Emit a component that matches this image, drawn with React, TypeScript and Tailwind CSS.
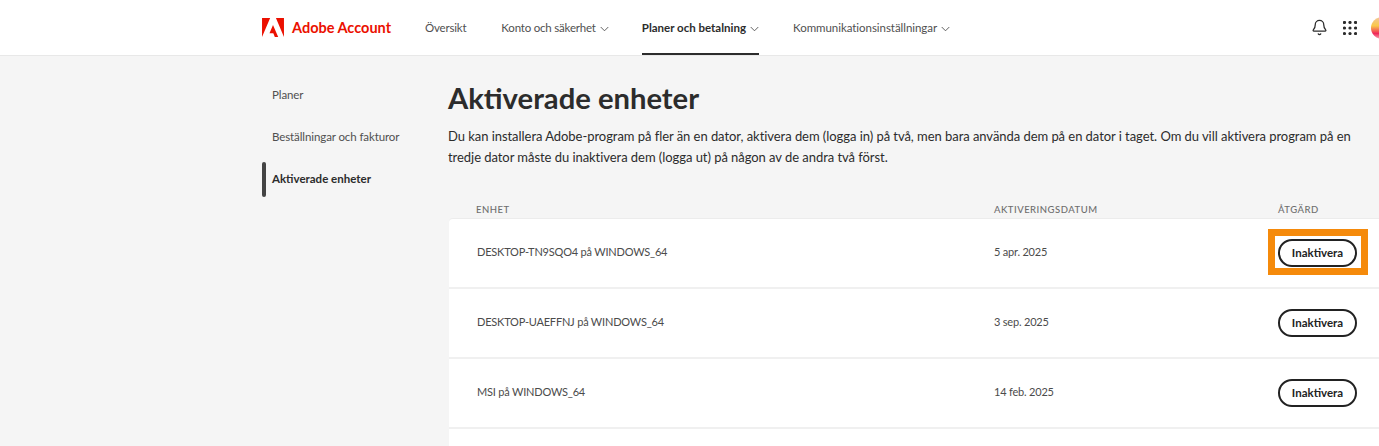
import { Bell } from 'lucide-react';

const Chevron = () => (
  <svg viewBox="0 0 10 6" className="w-[9px] h-[6px] ml-[4px] mt-[2px] shrink-0" fill="none" stroke="#505050" strokeWidth="1">
    <path d="M.8.8 5 5l4.2-4.2" />
  </svg>
);

const AdobeLogo = () => (
  <svg viewBox="0 0 30 26" className="w-[22px] h-[19px] shrink-0" fill="#eb1000">
    <path d="M19 0h11v26zM11.1 0H0v26zM15 9.6 22.1 26h-4.6l-2.1-5.2h-5.2z" />
  </svg>
);

const GridIcon = () => (
  <svg viewBox="0 0 14 14" className="w-[14px] h-[14px]" fill="#2c2c2c">
    {[1.5, 7, 12.5].map((y) =>
      [1.5, 7, 12.5].map((x) => <circle key={`${x}-${y}`} cx={x} cy={y} r="1.6" />)
    )}
  </svg>
);

const devices = [
  { name: 'DESKTOP-TN9SQO4 på WINDOWS_64', date: '5 apr. 2025', highlight: true },
  { name: 'DESKTOP-UAEFFNJ på WINDOWS_64', date: '3 sep. 2025', highlight: false },
  { name: 'MSI på WINDOWS_64', date: '14 feb. 2025', highlight: false },
];

export default function App() {
  return (
    <div className="w-[1379px] h-[446px] overflow-hidden bg-[#f5f5f5] font-['Lato',sans-serif] text-[#2c2c2c]">
      {/* Header */}
      <header className="h-[56px] bg-white border-b border-[#e8e8e8] flex pl-[262px] w-[1393px]">
        <div className="flex items-center">
          <AdobeLogo />
          <span className="ml-2 text-[14.5px] font-bold text-[#eb1000]">Adobe Account</span>
        </div>
        <nav className="flex text-[11.5px] text-[#505050] ml-[34px]">
          <div className="flex items-center mr-[35px] tracking-[-0.2px]">Översikt</div>
          <div className="flex items-center mr-[33px] tracking-[-0.2px]">Konto och säkerhet<Chevron /></div>
          <div className="relative flex items-center mr-[34px] font-bold text-[#2c2c2c]">
            Planer och betalning<Chevron />
            <div className="absolute left-0 right-0 bottom-0 h-[2px] bg-[#2c2c2c]" />
          </div>
          <div className="flex items-center tracking-[-0.05px]">Kommunikationsinställningar<Chevron /></div>
        </nav>
        <div className="ml-auto flex items-center">
          <Bell className="w-[17px] h-[17px] text-[#2c2c2c]" strokeWidth={1.8} />
          <div className="ml-[15px] flex"><GridIcon /></div>
          <div className="ml-[14px] w-[22px] h-[22px] rounded-full bg-[linear-gradient(180deg,#f3c69a_0%,#f9c84a_40%,#f0285a_75%,#f7a6b0_100%)]" />
        </div>
      </header>

      <div className="flex pl-[262px]">
        {/* Sidebar */}
        <aside className="w-[186px] shrink-0 pt-[22px] text-[11.5px] tracking-[-0.1px] text-[#505050]">
          <div className="h-[34px] flex items-center pl-[10px]">Planer</div>
          <div className="h-[34px] flex items-center pl-[10px] mt-2">Beställningar och fakturor</div>
          <div className="h-[35px] flex items-center pl-[10px] pb-[1px] mt-2 font-bold tracking-normal text-[#2c2c2c] relative">
            <div className="absolute left-0 top-0 bottom-0 w-1 rounded-sm bg-[#444]" />
            Aktiverade enheter
          </div>
        </aside>

        {/* Main */}
        <main className="w-[960px] shrink-0">
          <h1 className="mt-[22px] text-[29.2px] leading-[40px] font-bold">Aktiverade enheter</h1>
          <p className="mt-[8px] text-[13px] leading-[21px] tracking-[-0.05px] text-[#2c2c2c] w-[912px]">
            Du kan installera Adobe-program på fler än en dator, aktivera dem (logga in) på två, men bara använda dem på en dator i taget. Om du vill aktivera program på en tredje dator måste du inaktivera dem (logga ut) på någon av de andra två först.
          </p>

          <div className="flex mt-[33px] h-[17px] pt-[2px] items-start text-[9.5px] tracking-[0.5px] text-[#6e6e6e] font-medium">
            <div className="w-[546px] pl-[28px]">ENHET</div>
            <div className="w-[284px]">AKTIVERINGSDATUM</div>
            <div>ÅTGÄRD</div>
          </div>

          <div className="ml-[1px] bg-white rounded-t-[4px] border-t border-[#ececec]">
            {devices.map((d) => (
              <div key={d.name} className="h-[70px] flex items-center border-b-2 border-[#f0f0f0] text-[11px] tracking-[-0.2px] text-[#4b4b4b]">
                <div className="w-[545px] pl-[28px] pb-[2px]">{d.name}</div>
                <div className="w-[284px] pb-[2px]">{d.date}</div>
                <div className="relative">
                  <button className="relative w-[79px] h-[28px] rounded-full border-2 border-[#222] bg-white text-[11.5px] tracking-normal font-bold text-[#222]">
                    Inaktivera
                  </button>
                  {d.highlight && (
                    <div className="absolute -left-[10px] -top-[10px] w-[100px] h-[46px] border-[7px] border-[#f58a0b]" />
                  )}
                </div>
              </div>
            ))}
            <div className="h-[18px]" />
          </div>
        </main>
      </div>
    </div>
  );
}
